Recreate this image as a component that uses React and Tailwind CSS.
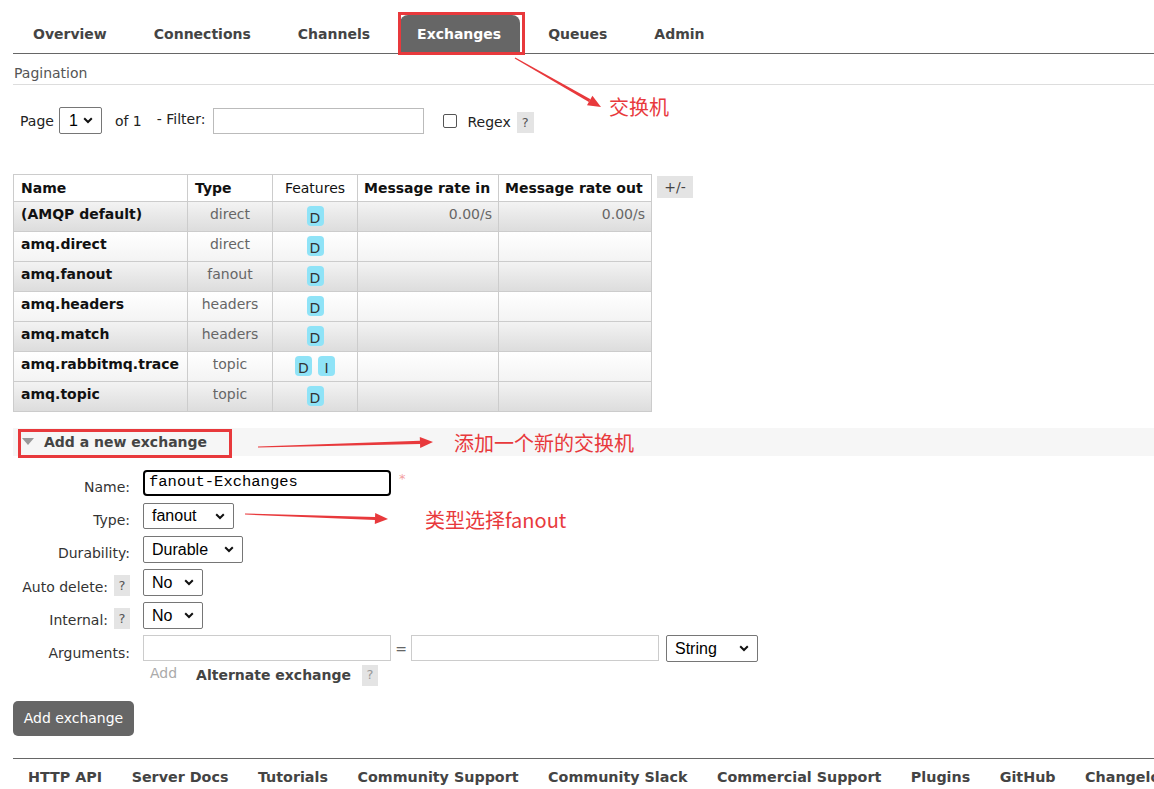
import React from "react";

function Chevron() {
  return (
    <svg width="10" height="7" viewBox="0 0 10 7" className="shrink-0">
      <path d="M1.2 1.3 L5 5 L8.8 1.3" fill="none" stroke="#111" strokeWidth="2" />
    </svg>
  );
}

function Sel({ className, text }) {
  return (
    <div
      className={
        "flex items-center justify-between border border-[#767676] rounded-[2px] bg-white pl-[8px] pr-[8px] text-[16px] text-black font-['Liberation_Sans',Arial,sans-serif] " +
        className
      }
    >
      <span className="leading-[18px]">{text}</span>
      <Chevron />
    </div>
  );
}

function Help({ className = "" }) {
  return (
    <span
      className={
        "inline-flex items-center justify-center w-[16px] h-[21px] bg-[#e4e4e4] text-[#555] text-[13px] " +
        className
      }
    >
      ?
    </span>
  );
}

function Arrow({ x1, y1, x2, y2 }) {
  const dx = x2 - x1;
  const dy = y2 - y1;
  const len = Math.hypot(dx, dy);
  const ux = dx / len;
  const uy = dy / len;
  const px = -uy;
  const py = ux;
  const headL = 13;
  const headW = 5.5;
  const bx = x2 - ux * headL;
  const by = y2 - uy * headL;
  const w0 = 0.6;
  const w1 = 1.6;
  const shaft = [
    [x1 + px * w0, y1 + py * w0],
    [bx + px * w1, by + py * w1],
    [bx - px * w1, by - py * w1],
    [x1 - px * w0, y1 - py * w0],
  ];
  const head = [
    [x2, y2],
    [bx + px * headW, by + py * headW],
    [bx - px * headW, by - py * headW],
  ];
  const s = (pts) => pts.map((p) => p[0].toFixed(1) + "," + p[1].toFixed(1)).join(" ");
  return (
    <g fill="#e8393c">
      <polygon points={s(shaft)} />
      <polygon points={s(head)} />
    </g>
  );
}

const tabs = ["Overview", "Connections", "Channels", "Exchanges", "Queues", "Admin"];

const rows = [
  { name: "(AMQP default)", type: "direct", f: ["D"], rin: "0.00/s", rout: "0.00/s" },
  { name: "amq.direct", type: "direct", f: ["D"] },
  { name: "amq.fanout", type: "fanout", f: ["D"] },
  { name: "amq.headers", type: "headers", f: ["D"] },
  { name: "amq.match", type: "headers", f: ["D"] },
  { name: "amq.rabbitmq.trace", type: "topic", f: ["D", "I"] },
  { name: "amq.topic", type: "topic", f: ["D"] },
];

const footer = [
  "HTTP API",
  "Server Docs",
  "Tutorials",
  "Community Support",
  "Community Slack",
  "Commercial Support",
  "Plugins",
  "GitHub",
  "Changelog",
];

export default function App() {
  return (
    <div className="relative w-[1154px] h-[789px] overflow-hidden bg-white text-[14px] text-[#444] font-['DejaVu_Sans',Verdana,sans-serif]">
      <div className="pl-[13px] pt-[15px]">
        {/* Tabs */}
        <div className="flex items-end h-[39px] border-b border-[#666] gap-[11px] pl-[3px]">
          {tabs.map((t) => (
            <div
              key={t}
              className={
                "h-[38px] flex items-center pl-[17px] pr-[19px] font-bold rounded-t-[8px] " +
                (t === "Exchanges" ? "bg-[#666] text-white" : "text-[#444]")
              }
            >
              {t}
            </div>
          ))}
        </div>

        {/* Pagination */}
        <div className="mt-[9px] pl-px pb-[1px] border-b border-[#ddd] leading-[20px] text-[#555]">
          Pagination
        </div>
        <div className="flex items-center mt-[22px] pl-[7px] h-[27px] text-[#222]">
          <span className="mt-[2px]">Page</span>
          <Sel className="ml-[5px] w-[43px] h-[27px] pl-[9px]" text="1" />
          <span className="ml-[13px] mt-[2px]">of 1</span>
          <span className="ml-[15px] -mt-[3px]">- Filter:</span>
          <div className="ml-[8px] w-[211px] h-[26px] border border-[#bbb] bg-white" />
          <div className="ml-[19px] w-[14px] h-[14px] border border-[#555] rounded-[2px] bg-white" />
          <span className="ml-[10px] mt-[4px]">Regex</span>
          <Help className="ml-[6px] mt-[4px] w-[17px]" />
        </div>

        {/* Table */}
        <div className="flex items-start mt-[40px]">
          <table className="table-fixed w-[638px] border-collapse border border-[#ccc] text-[14px] whitespace-nowrap">
            <colgroup>
              <col className="w-[174px]" />
              <col className="w-[85px]" />
              <col className="w-[85px]" />
              <col className="w-[141px]" />
              <col className="w-[153px]" />
            </colgroup>
            <thead>
              <tr className="h-[27px] bg-white text-[#111]">
                <th className="border border-[#ccc] px-[7px] py-0 text-left font-bold">Name</th>
                <th className="border border-[#ccc] px-[7px] py-0 text-left font-bold">Type</th>
                <th className="border border-[#ccc] px-[2px] py-0 text-center font-normal">Features</th>
                <th className="border border-[#ccc] px-[6px] py-0 text-left font-bold">Message rate in</th>
                <th className="border border-[#ccc] px-[6px] py-0 text-left font-bold">Message rate out</th>
              </tr>
            </thead>
            <tbody>
              {rows.map((r, i) => (
                <tr
                  key={r.name}
                  className={
                    "h-[30px] bg-linear-to-b " +
                    (i % 2 === 0 ? "from-[#f3f3f3] to-[#dcdcdc]" : "from-white to-[#f3f3f3]")
                  }
                >
                  <td className="border border-[#ccc] px-[7px] pt-[4px] pb-[7px] align-top leading-[17px] font-bold text-[#111]">
                    {r.name}
                  </td>
                  <td className="border border-[#ccc] px-[4px] pt-[4px] pb-[7px] align-top leading-[17px] text-center text-[#666]">
                    {r.type}
                  </td>
                  <td className="border border-[#ccc] px-[4px] pt-[4px] pb-[2px] align-top text-center">
                    <div className="flex justify-center gap-[6px]">
                      {r.f.map((f) => (
                        <span
                          key={f}
                          className="inline-flex items-center justify-center w-[17px] h-[20px] rounded-[4px] bg-[#8fe3f7] text-[#333] text-[14px] leading-none pt-[3px]"
                        >
                          {f}
                        </span>
                      ))}
                    </div>
                  </td>
                  <td className="border border-[#ccc] px-[6px] pt-[4px] pb-[7px] align-top leading-[17px] text-right text-[#666]">
                    {r.rin || ""}
                  </td>
                  <td className="border border-[#ccc] px-[6px] pt-[4px] pb-[7px] align-top leading-[17px] text-right text-[#666]">
                    {r.rout || ""}
                  </td>
                </tr>
              ))}
            </tbody>
          </table>
          <div className="ml-[5px] mt-[2px] w-[36px] h-[22px] bg-[#e4e4e4] flex items-center justify-center text-[#444]">
            +/-
          </div>
        </div>

        {/* Add a new exchange */}
        <div className="mt-[16px] h-[28px] bg-[#f6f6f6] flex items-center pl-[9px]">
          <svg width="12" height="8" viewBox="0 0 12 8">
            <path d="M0 0 L12 0 L6 7 Z" fill="#999" />
          </svg>
          <span className="ml-[10px] font-bold text-[#444]">Add a new exchange</span>
        </div>

        <div className="grid grid-cols-[117px_auto] gap-x-[13px] gap-y-[6px] mt-[14px] text-[#333]">
          {/* Name */}
          <div className="h-[27px] text-right pt-[9px] leading-[17px]">Name:</div>
          <div className="h-[27px] flex items-start">
            <div className="w-[248px] h-[26px] border-2 border-black rounded-[4px] bg-white pl-[4px] flex items-center text-[15.5px] text-black font-['Liberation_Mono','Courier_New',monospace]">
              fanout-Exchanges
            </div>
            <span className="ml-[8px] -mt-[1px] text-[#f3a0a0] text-[13px]">*</span>
          </div>

          {/* Type */}
          <div className="h-[27px] text-right pt-[9px] leading-[17px]">Type:</div>
          <div className="h-[27px]">
            <Sel className="w-[91px] h-[26px]" text="fanout" />
          </div>

          {/* Durability */}
          <div className="h-[27px] text-right pt-[9px] leading-[17px]">Durability:</div>
          <div className="h-[27px]">
            <Sel className="w-[100px] h-[27px]" text="Durable" />
          </div>

          {/* Auto delete */}
          <div className="h-[27px] flex justify-end items-end">
            <span className="leading-[17px]">Auto delete:</span>
            <Help className="ml-[6px]" />
          </div>
          <div className="h-[27px]">
            <Sel className="w-[60px] h-[27px]" text="No" />
          </div>

          {/* Internal */}
          <div className="h-[27px] flex justify-end items-end">
            <span className="leading-[17px]">Internal:</span>
            <Help className="ml-[6px]" />
          </div>
          <div className="h-[27px]">
            <Sel className="w-[60px] h-[27px]" text="No" />
          </div>

          {/* Arguments */}
          <div className="h-[27px] text-right pt-[10px] leading-[17px]">Arguments:</div>
          <div className="h-[27px] flex items-start">
            <div className="w-[248px] h-[26px] border border-[#ccc] bg-white" />
            <span className="w-[20px] text-center text-[#666] mt-[4px]">=</span>
            <div className="w-[248px] h-[26px] border border-[#ccc] bg-white" />
            <Sel className="ml-[7px] w-[92px] h-[27px] pl-[8px]" text="String" />
          </div>

          {/* Add row */}
          <div />
          <div className="-mt-[6px] h-[24px] flex items-center">
            <span className="ml-[7px] -mt-[2px] text-[#aaa]">Add</span>
            <span className="ml-[19px] mt-[2px] font-bold text-[#444]">Alternate exchange</span>
            <Help className="ml-[11px] mt-[2px] text-[#999]" />
          </div>
        </div>

        <div className="mt-[15px] w-[121px] h-[35px] rounded-[5px] bg-[#666] text-white flex items-center justify-center">
          Add exchange
        </div>

        {/* Footer */}
        <div className="mt-[22px] border-t border-[#666] h-[38px] flex items-center pl-[15px] gap-[29.5px] whitespace-nowrap">
          {footer.map((f) => (
            <span key={f} className="font-bold text-[14.3px] text-[#444]">
              {f}
            </span>
          ))}
        </div>
      </div>

      {/* Annotations (overlay) */}
      <div className="absolute left-[398px] top-[12px] w-[127px] h-[43px] border-[3px] border-[#e8393c] pointer-events-none" />
      <div className="absolute left-[18px] top-[429px] w-[214px] h-[29px] border-[3px] border-[#e8393c] pointer-events-none" />
      <svg className="absolute left-0 top-0 pointer-events-none" width="1154" height="789">
        <Arrow x1={515} y1={58} x2={601} y2={107} />
        <Arrow x1={258} y1={447} x2={433} y2={442} />
        <Arrow x1={245} y1={514} x2={388} y2={519} />
      </svg>
      <div className="absolute left-[609px] top-[95px] text-[20px] leading-[24px] text-[#e8393c] font-['Noto_Sans_CJK_SC',sans-serif]">
        交换机
      </div>
      <div className="absolute left-[454px] top-[431px] text-[20px] leading-[24px] text-[#e8393c] font-['Noto_Sans_CJK_SC',sans-serif]">
        添加一个新的交换机
      </div>
      <div className="absolute left-[425px] top-[508px] text-[20px] leading-[24px] text-[#e8393c] font-['Noto_Sans_CJK_SC',sans-serif]">
        类型选择fanout
      </div>
    </div>
  );
}
